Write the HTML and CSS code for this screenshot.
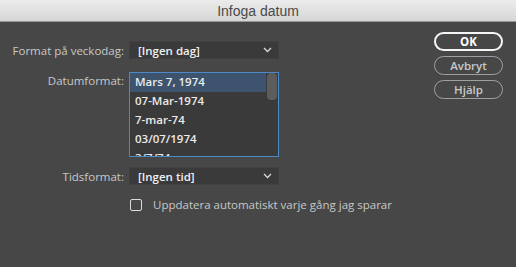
FILE: index.html
```html
<html>
    <head>
        <meta charset="utf-8">
        <title>Infoga datum</title>
        <link rel="stylesheet" href="styles.css">
    </head>
    <body>
        <div id="dialog">
            <div id="titlebar">Infoga datum</div>

            <div id="content">
                <div id="form">
                    <label class="label">Format på veckodag:</label>
                    <div class="select">
                        <span>[Ingen dag]</span>
                        <svg class="chevron" width="9" height="6" viewBox="0 0 9 6"><path d="M1 1 L4.5 4.5 L8 1" fill="none" stroke="#d8d8d8" stroke-width="1.3"/></svg>
                    </div>

                    <label class="label top">Datumformat:</label>
                    <div id="listbox">
                        <div class="items">
                            <div class="item selected">Mars 7, 1974</div>
                            <div class="item">07-Mar-1974</div>
                            <div class="item">7-mar-74</div>
                            <div class="item">03/07/1974</div>
                            <div class="item">3/7/74</div>
                        </div>
                        <div class="scrollbar"><div class="thumb"></div></div>
                    </div>

                    <label class="label">Tidsformat:</label>
                    <div class="select">
                        <span>[Ingen tid]</span>
                        <svg class="chevron" width="9" height="6" viewBox="0 0 9 6"><path d="M1 1 L4.5 4.5 L8 1" fill="none" stroke="#d8d8d8" stroke-width="1.3"/></svg>
                    </div>

                    <div></div>
                    <div class="check">
                        <span class="box"></span>
                        <span>Uppdatera automatiskt varje gång jag sparar</span>
                    </div>
                </div>

                <div id="buttons">
                    <button class="default">OK</button>
                    <button>Avbryt</button>
                    <button>Hjälp</button>
                </div>
            </div>
        </div>
    </body>
</html>
```

FILE: styles.css
```css
body {
    margin: 0;
    font-family: 'Open Sans', 'Liberation Sans', sans-serif;
    background-color: rgb(71, 71, 71);
}
#dialog {
    width: 516px;
    height: 267px;
    background-color: rgb(71, 71, 71);
    overflow: hidden;
}
#titlebar {
    height: 21px;
    line-height: 22px;
    text-align: center;
    font-family: 'Liberation Sans', sans-serif;
    font-size: 14px;
    color: rgb(74, 74, 74);
    background: linear-gradient(rgb(236, 236, 236), rgb(214, 214, 214));
    border-bottom: 1px solid rgb(150, 150, 150);
}
#content {
    display: flex;
    justify-content: space-between;
    padding: 10px 13px 0 0;
}
#form {
    display: grid;
    grid-template-columns: 124px 150px;
    column-gap: 5px;
    margin-top: 9px;
}
.label {
    font-size: 11.5px;
    color: rgb(200, 200, 200);
    text-align: right;
    align-self: center;
    white-space: nowrap;
}
.label.top {
    align-self: start;
    padding-top: 1px;
    margin-top: 13px;
}
.select {
    display: flex;
    align-items: center;
    justify-content: space-between;
    height: 18px;
    padding: 0 6px 0 8px;
    background-color: rgb(58, 58, 58);
    border: 1px solid rgb(64, 64, 64);
    box-sizing: border-box;
    font-size: 11.5px;
    font-weight: 600;
    color: rgb(240, 240, 240);
}
#listbox {
    display: flex;
    height: 85px;
    margin: 13px 0 10px;
    background-color: rgb(58, 58, 58);
    border: 1px solid rgb(77, 137, 200);
    box-sizing: border-box;
    overflow: hidden;
}
.items {
    flex: 1;
}
.item {
    height: 19px;
    line-height: 18px;
    padding-left: 5px;
    font-size: 11.5px;
    font-weight: 600;
    color: rgb(235, 235, 235);
}
.selected {
    background-color: rgb(62, 84, 110);
}
.scrollbar {
    width: 12px;
    padding: 0 1px;
    box-sizing: border-box;
}
.thumb {
    height: 27px;
    background-color: rgb(92, 92, 92);
    border-radius: 4px;
}
.check {
    display: flex;
    align-items: center;
    margin-top: 12px;
    font-size: 11.5px;
    color: rgb(200, 200, 200);
    white-space: nowrap;
}
.box {
    flex-shrink: 0;
    width: 10px;
    height: 10px;
    margin: 0 11px 0 1px;
    border: 1px solid rgb(220, 220, 220);
    border-radius: 2px;
}
#buttons {
    display: flex;
    flex-direction: column;
    gap: 5px;
}
button {
    width: 69px;
    height: 19px;
    font-family: 'Open Sans', 'Liberation Sans', sans-serif;
    font-size: 11.5px;
    font-weight: 600;
    color: rgb(200, 200, 200);
    background: none;
    border: 1px solid rgb(160, 160, 160);
    border-radius: 10px;
    padding: 0;
}
button.default {
    color: rgb(255, 255, 255);
    font-weight: 700;
    border: 2px solid rgb(245, 245, 245);
}
```
